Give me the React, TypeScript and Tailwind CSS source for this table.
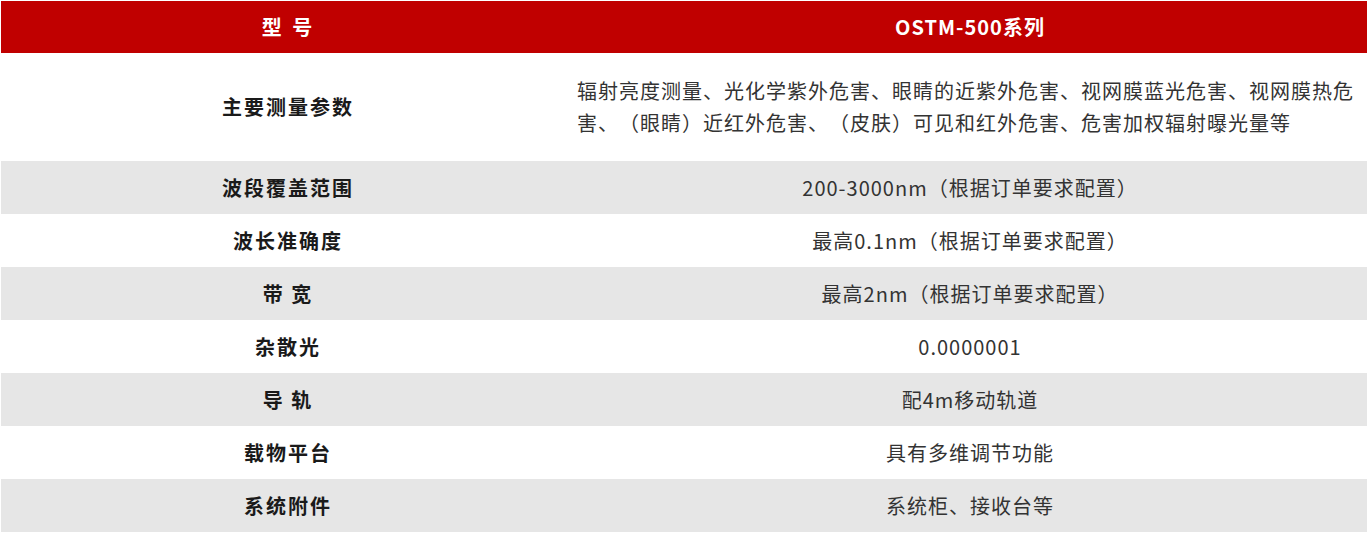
import React from "react";

const rows: { k: string; v: string; tall?: boolean }[] = [
  {
    k: "主要测量参数",
    v: "辐射亮度测量、光化学紫外危害、眼睛的近紫外危害、视网膜蓝光危害、视网膜热危害、（眼睛）近红外危害、（皮肤）可见和红外危害、危害加权辐射曝光量等",
    tall: true,
  },
  { k: "波段覆盖范围", v: "200-3000nm（根据订单要求配置）" },
  { k: "波长准确度", v: "最高0.1nm（根据订单要求配置）" },
  { k: "带 宽", v: "最高2nm（根据订单要求配置）" },
  { k: "杂散光", v: "0.0000001" },
  { k: "导 轨", v: "配4m移动轨道" },
  { k: "载物平台", v: "具有多维调节功能" },
  { k: "系统附件", v: "系统柜、接收台等" },
];

export default function App() {
  return (
    <div
      className="w-[1370px] h-[535px] bg-white pl-px pt-px [text-spacing-trim:space-all]"
      style={{ fontFamily: '"Noto Sans CJK SC", "Noto Sans", sans-serif' }}
    >
      <div className="w-[1366px]">
        <div className="grid grid-cols-[572px_1fr] h-[52px] bg-[#c00000] text-white font-bold text-[20px]">
          <div className="flex items-center justify-center whitespace-pre tracking-[3px] pl-[3px]">型 号</div>
          <div className="flex items-center justify-center tracking-[1px]">OSTM-500系列</div>
        </div>
        {rows.map((r, i) => (
          <div
            key={i}
            className={`grid grid-cols-[572px_1fr] ${r.tall ? "h-[108px]" : "h-[53px]"} ${
              i % 2 === 1 ? "bg-[#e6e6e6]" : "bg-white"
            } text-[20px]`}
          >
            <div className="flex items-center justify-center font-bold text-[#1a1a1a] whitespace-pre tracking-[2px] pl-[2px]">
              {r.k}
            </div>
            {r.tall ? (
              <div className="flex items-center pl-[4px] pr-[8px] text-[#333333] leading-[32px] tracking-[1px]">
                {r.v}
              </div>
            ) : (
              <div className="flex items-center justify-center text-[#333333] tracking-[1px]">{r.v}</div>
            )}
          </div>
        ))}
      </div>
    </div>
  );
}
